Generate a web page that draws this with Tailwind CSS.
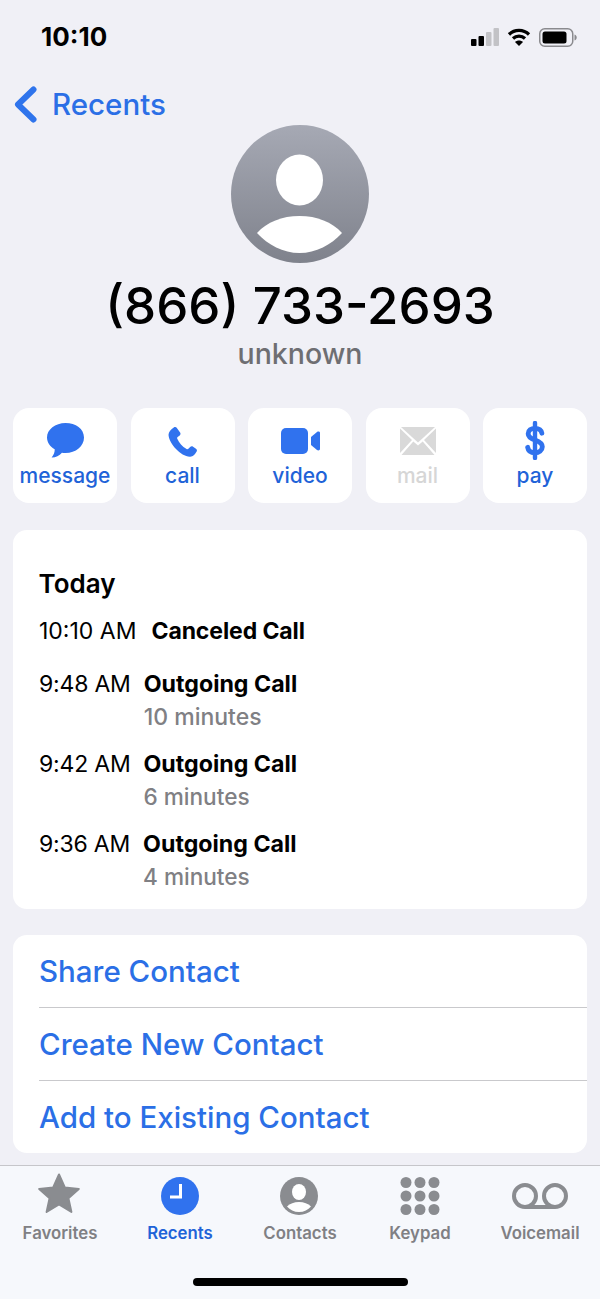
<!DOCTYPE html>
<html lang="en">
<head>
  <meta charset="UTF-8">
  <meta name="viewport" content="width=device-width, initial-scale=1.0">
  <title>Recents</title>
  <script src="https://cdn.jsdelivr.net/npm/@tailwindcss/browser@4"></script>
</head>
<body class="bg-[#f0f0f6] font-['Inter',sans-serif] text-black">
<div class="w-[600px] h-[1299px] flex flex-col overflow-hidden">

  <!-- status bar -->
  <div class="h-[74px] flex items-center justify-between pl-[41px] pr-[23px] shrink-0">
    <span class="text-[26px] leading-none font-bold">10:10</span>
    <div class="flex items-center gap-[8px]">
      <svg width="28" height="18" viewBox="0 0 28 18"><rect x="0" y="11" width="5.500" height="7" rx="1" fill="#000"/><rect x="7.500" y="8" width="5.500" height="10" rx="1" fill="#000"/><rect x="15" y="4" width="5.500" height="14" rx="1" fill="#c2c2c6"/><rect x="22.500" y="0" width="5.500" height="18" rx="1" fill="#c2c2c6"/></svg>
      <svg width="24" height="18" viewBox="0 0 23 18" fill="none" stroke="#000" stroke-width="3.200"><path d="M1.500 6.500C7 1 16 1 21.500 6.500"/><path d="M5.500 10.500C8.800 7.300 14.200 7.300 17.500 10.500"/><path d="M11.500 18l-4-4c2.300-2 5.700-2 8 0z" fill="#000" stroke="none"/></svg>
      <svg width="38" height="19" viewBox="0 0 38 19"><rect x="0.750" y="0.750" width="33" height="17.500" rx="5" fill="none" stroke="#8a8a8e" stroke-width="1.500"/><rect x="3.500" y="3.500" width="24" height="12" rx="2.500" fill="#000"/><path d="M35.500 6.500c1.500.5 2.200 1.600 2.200 3s-.7 2.500-2.200 3z" fill="#8a8a8e"/></svg>
    </div>
  </div>

  <!-- back -->
  <div class="h-[51px] flex items-center pl-[14px] gap-[15px] text-[#2b6fe6] shrink-0">
    <svg width="23" height="37" viewBox="0 0 23 37" fill="none" stroke="#2f74ec" stroke-width="6" stroke-linecap="round" stroke-linejoin="round" class="relative top-[5px]"><path d="M19.500 3.500L4 18.500l15.500 15"/></svg>
    <span class="text-[29.500px] leading-none font-medium relative top-[5px]">Recents</span>
  </div>

  <!-- avatar -->
  <div class="flex flex-col items-center shrink-0">
    <svg width="138" height="138" viewBox="0 0 138 138">
      <defs><linearGradient id="g" x1="0" y1="0" x2="0" y2="1"><stop offset="0" stop-color="#a6a9b4"/><stop offset="1" stop-color="#7f828c"/></linearGradient></defs>
      <circle cx="69" cy="69" r="69" fill="url(#g)"/>
      <ellipse cx="68.500" cy="55" rx="23.500" ry="25.500" fill="#fff"/>
      <path d="M26 108C36 97 51 91 68.500 91S101 97 111 108C100 120 85 128 68.500 128S37 120 26 108z" fill="#fff"/>
    </svg>
    <div class="mt-[13px] text-[51px] leading-[60px] font-medium">(866) 733-2693</div>
    <div class="text-[28.500px] leading-[34px] text-[#6e6e72] font-medium mt-[1px]">unknown</div>
  </div>

  <!-- actions -->
  <div class="mt-[37px] px-[13px] flex justify-between shrink-0">
    <div class="w-[104px] h-[95px] bg-white rounded-[16px] flex flex-col items-center text-[#1f63d8]">
      <div class="h-[54px] pt-[15px]"><svg width="37" height="35" viewBox="0 0 36 35" preserveAspectRatio="none"><path d="M18 0C8 0 0 6.500 0 14.500c0 5 3 9.300 7.500 11.800.2 2.700-1 5.700-3 8.200 3.500.2 7.500-1.700 10-4.800 1.100.2 2.300.3 3.500.3 10 0 18-6.800 18-15.500S28 0 18 0z" fill="#3072ee"/></svg></div>
      <span class="text-[21px] leading-[28px] font-medium">message</span>
    </div>
    <div class="w-[104px] h-[95px] bg-white rounded-[16px] flex flex-col items-center text-[#1f63d8]">
      <div class="h-[54px] pt-[19px]"><svg width="31" height="31" viewBox="0 0 30 32"><path d="M6 .6c1-.8 2.400-.6 3.200.4l3.300 4.700c.7 1 .5 2.200-.4 3L10 10.300c-.6.500-.7 1.200-.4 1.900 2 4.500 5 8 9.600 10.600.7.400 1.400.2 1.900-.3l1.800-1.900c.8-.9 2.100-1 3-.3l3 2.100c1 .7 1.300 2 .7 3-1.300 2.400-3.900 5.600-7 5.400C13 30 1.500 17.500.6 8.500.3 5.500 3 2.500 6 .6z" fill="#3072ee"/></svg></div>
      <span class="text-[21px] leading-[28px] font-medium">call</span>
    </div>
    <div class="w-[104px] h-[95px] bg-white rounded-[16px] flex flex-col items-center text-[#1f63d8]">
      <div class="h-[54px] pt-[20px]"><svg width="39" height="26" viewBox="0 0 39 26"><rect x="0" y="0" width="27" height="26" rx="5" fill="#3072ee"/><path d="M30 9L36 4C37.200 3.200 39 3.700 39 5v16c0 1.300-1.800 1.800-3 1l-6-5z" fill="#3072ee"/></svg></div>
      <span class="text-[21px] leading-[28px] font-medium">video</span>
    </div>
    <div class="w-[104px] h-[95px] bg-white rounded-[16px] flex flex-col items-center text-[#d6d6d6]">
      <div class="h-[54px] pt-[19px]"><svg width="36" height="28" viewBox="0 0 36 28"><path d="M1 0h34L18 15.500z" fill="#d9d9d9"/><path d="M0 1.500l12 11.500L0 26zM36 1.500L24 13l12 13z" fill="#d9d9d9"/><path d="M1.500 28L13.300 14.500 18 18.500l4.700-4 11.800 13.500z" fill="#d9d9d9"/></svg></div>
      <span class="text-[21px] leading-[28px] font-medium">mail</span>
    </div>
    <div class="w-[104px] h-[95px] bg-white rounded-[16px] flex flex-col items-center text-[#1f63d8]">
      <div class="h-[54px] pt-[13px]"><svg width="20" height="39" viewBox="0 0 20 40" fill="none" stroke="#3072ee"><path d="M10 2v36" stroke-width="4.500" stroke-linecap="round"/><path d="M17 12.500c-.5-3-3.200-5-7-5-4 0-7 2.200-7 5.500 0 3.500 3 5 7 6.500 4.200 1.500 7.500 3 7.500 7 0 3.500-3.300 6-7.500 6-4 0-7-2-7.500-5.500" stroke-width="5" stroke-linecap="round"/></svg></div>
      <span class="text-[21px] leading-[28px] font-medium">pay</span>
    </div>
  </div>

  <!-- call list -->
  <div class="mt-[27px] mx-[13px] h-[379px] bg-white rounded-[14px] pl-[26px] pt-[38px] shrink-0 flex flex-col">
    <div class="text-[26px] leading-[32px] font-semibold -ml-[0.500px]">Today</div>
    <div class="mt-[16px] flex gap-[15px] text-[23px] leading-[30px]"><span>10:10 AM</span><span class="font-bold tracking-[-0.1px]">Canceled Call</span></div>
    <div class="mt-[23px] flex gap-[13px] text-[23px] leading-[30px]"><span class="tracking-[-0.2px]">9:48 AM</span><div><div class="font-bold text-[23.200px]">Outgoing Call</div><div class="text-[#808084] mt-[3px] font-medium">10 minutes</div></div></div>
    <div class="mt-[17px] flex gap-[13px] text-[23px] leading-[30px]"><span class="tracking-[-0.2px]">9:42 AM</span><div><div class="font-bold text-[23.200px]">Outgoing Call</div><div class="text-[#808084] mt-[3px] font-medium text-[22.600px]">6 minutes</div></div></div>
    <div class="mt-[17px] flex gap-[13px] text-[23px] leading-[30px]"><span class="tracking-[-0.2px]">9:36 AM</span><div><div class="font-bold text-[23.200px]">Outgoing Call</div><div class="text-[#808084] mt-[3px] font-medium text-[22.600px]">4 minutes</div></div></div>
  </div>

  <!-- contact actions -->
  <div class="mt-[26px] mx-[13px] h-[218px] bg-white rounded-[14px] pl-[26px] shrink-0 flex flex-col text-[#2b6fe6] text-[29.500px] font-medium">
    <div class="h-[73px] flex items-center border-b border-[#c9c9cc]">Share Contact</div>
    <div class="h-[73px] flex items-center border-b border-[#c9c9cc]">Create New Contact</div>
    <div class="h-[72px] flex items-center">Add to Existing Contact</div>
  </div>

  <!-- tab bar -->
  <div class="mt-[12px] flex-1 bg-[#f6f8fc] border-t border-[#c6c6ca] relative">
    <div class="flex h-[84px] text-[#808084] text-[16.800px] font-semibold">
      <div class="w-[120px] flex flex-col items-center">
        <div class="h-[49px] flex items-end -ml-[2px]"><svg width="42" height="42" viewBox="0 0 42 42"><path d="M21 1.500l5.800 13 14 1.400-10.400 9.300 3 13.800L21 31.500 8.600 39l3-13.800L1.200 15.900l14-1.400z" fill="#8a8c90" stroke="#8a8c90" stroke-width="2" stroke-linejoin="round"/></svg></div>
        <span class="mt-[6px]">Favorites</span>
      </div>
      <div class="w-[120px] flex flex-col items-center text-[#1f63d8]">
        <div class="h-[49px] flex items-end -ml-[1px]"><svg width="38" height="38" viewBox="0 0 38 38"><circle cx="19" cy="19" r="19" fill="#3072ee"/><path d="M19.500 7v13H9" fill="none" stroke="#fff" stroke-width="3"/></svg></div>
        <span class="mt-[6px]">Recents</span>
      </div>
      <div class="w-[120px] flex flex-col items-center">
        <div class="h-[49px] flex items-end -ml-[2px]"><svg width="38" height="38" viewBox="0 0 38 38"><circle cx="19" cy="19" r="19" fill="#8a8c90"/><ellipse cx="19" cy="15" rx="7" ry="8" fill="#fff"/><path d="M7 29.500C10 26.500 14 25 19 25s9 1.500 12 4.500C28 33 24 35 19 35S10 33 7 29.500z" fill="#fff"/></svg></div>
        <span class="mt-[6px]">Contacts</span>
      </div>
      <div class="w-[120px] flex flex-col items-center">
        <div class="h-[49px] flex items-end -ml-[1px]"><svg width="40" height="38" viewBox="0 0 40 38" fill="#8a8c90"><circle cx="6" cy="5.500" r="5.500"/><circle cx="20" cy="5.500" r="5.500"/><circle cx="34" cy="5.500" r="5.500"/><circle cx="6" cy="19" r="5.500"/><circle cx="20" cy="19" r="5.500"/><circle cx="34" cy="19" r="5.500"/><circle cx="6" cy="32.500" r="5.500"/><circle cx="20" cy="32.500" r="5.500"/><circle cx="34" cy="32.500" r="5.500"/></svg></div>
        <span class="mt-[6px]">Keypad</span>
      </div>
      <div class="w-[120px] flex flex-col items-center">
        <div class="h-[49px] flex items-end pb-[6px]"><svg width="56" height="26" viewBox="0 0 56 26" fill="none" stroke="#8a8c90" stroke-width="4"><circle cx="13" cy="13" r="11"/><circle cx="43" cy="13" r="11"/><path d="M13 24h30"/></svg></div>
        <span class="mt-[6px]">Voicemail</span>
      </div>
    </div>
    <div class="absolute left-[193px] top-[112px] w-[215px] h-[8px] rounded-full bg-black"></div>
  </div>
</div>
</body>
</html>
